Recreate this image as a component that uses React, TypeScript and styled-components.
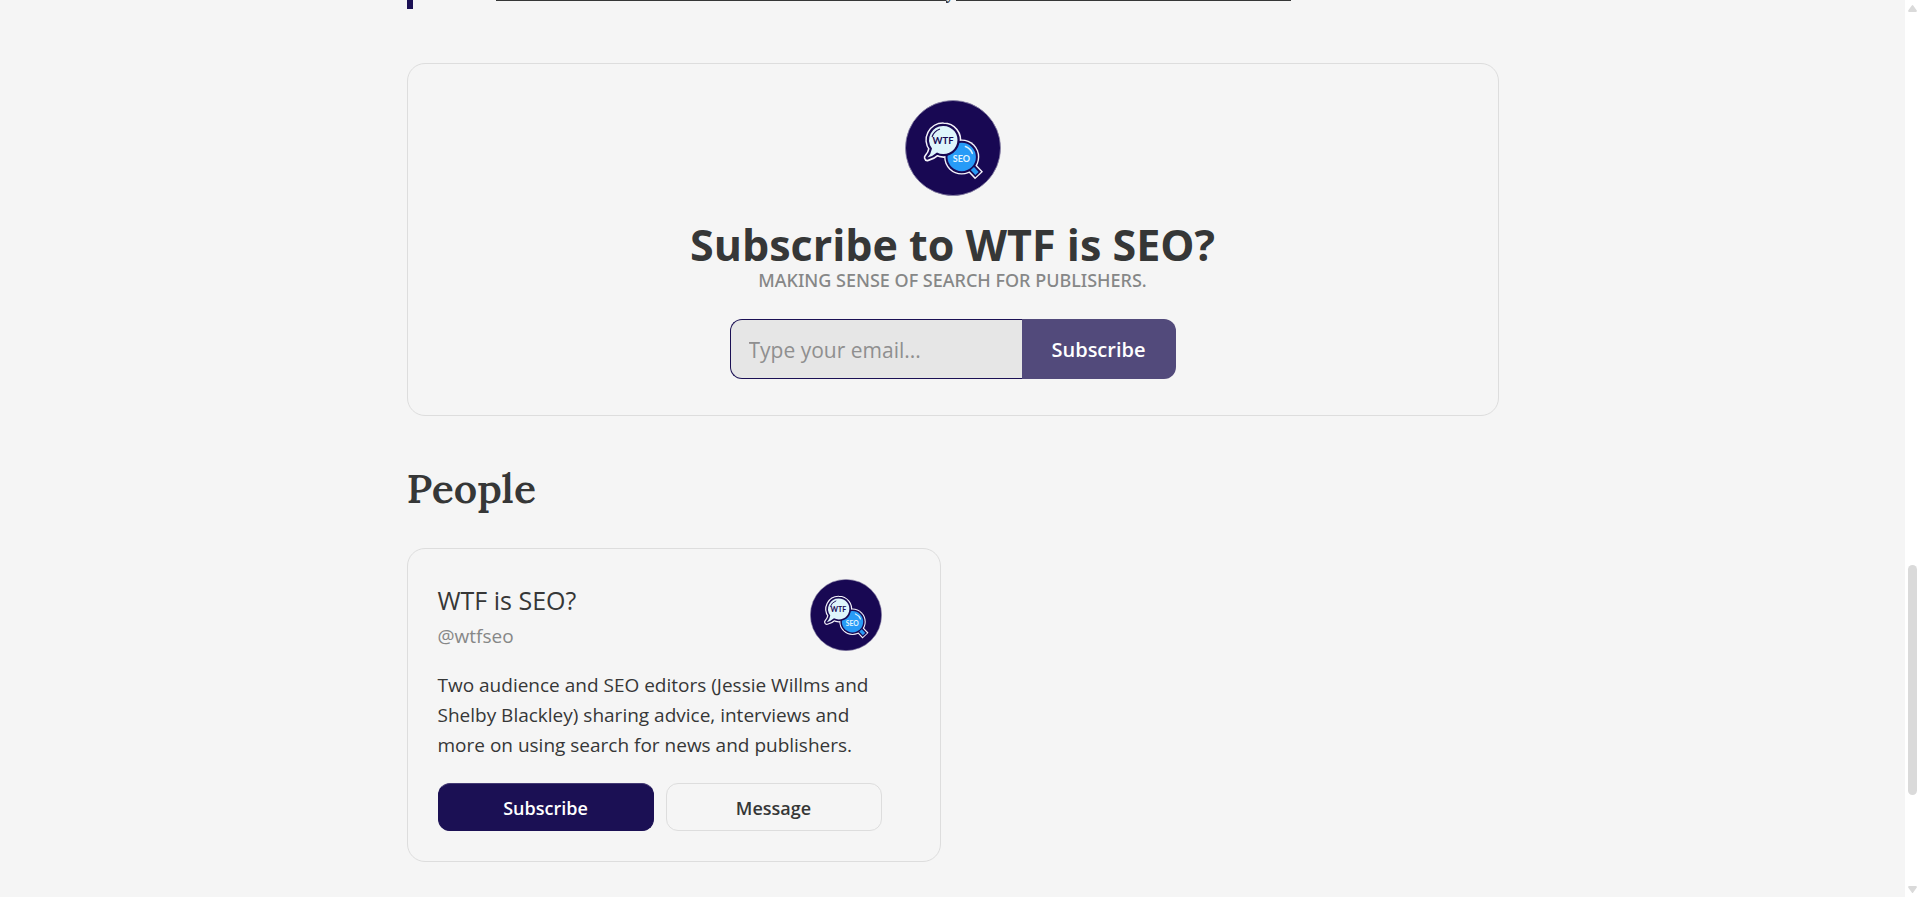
import React from "react";
import styled, { createGlobalStyle } from "styled-components";

const color = {
  page: "#f5f5f5",
  line: "#dddddd",
  ink: "#363737",
  muted: "#868787",
  brand: "#1b1054",
  brandSoft: "#524a7b",
  field: "#e6e6e6",
  thumb: "#dadada",
};

const GlobalStyle = createGlobalStyle`
  *, *::before, *::after { box-sizing: border-box; }
  body {
    margin: 0;
    background: ${color.page};
    color: ${color.ink};
    font-family: "Open Sans", "Noto Sans", sans-serif;
  }
  h1, h2, h3, p, blockquote { margin: 0; }
`;

const Page = styled.div`
  display: flex;
  height: 100vh;
  overflow: hidden;
`;

const Content = styled.main`
  flex: 1;
  padding: 0 24px;
`;

const Column = styled.div`
  max-width: 1092px;
  margin: 0 auto;
`;

const Quote = styled.blockquote`
  height: 9px;
  margin-bottom: 54px;
  padding-left: 83px;
  border-left: 6px solid ${color.brand};
`;

const QuoteLink = styled.a`
  display: flex;
  max-width: 795px;
  color: ${color.ink};
  text-decoration: none;
`;

const Underline = styled.span<{ $grow: number }>`
  flex: ${(p) => p.$grow} 1 0;
  height: 1px;
  background: ${color.ink};
`;

const Descender = styled.span`
  display: flex;
  align-items: flex-end;
  justify-content: center;
  width: 10px;
  height: 4px;
  overflow: hidden;
  font: 24px/30px Lora, "Liberation Serif", serif;
`;

const Card = styled.section`
  border: 1px solid ${color.line};
  border-radius: 18px;
`;

const SubscribeCard = styled(Card)`
  display: flex;
  flex-direction: column;
  align-items: center;
  padding: 36px 36px;
`;

const Avatar = styled.svg<{ $size: number }>`
  display: block;
  flex: none;
  width: ${(p) => p.$size}px;
  height: ${(p) => p.$size}px;
`;

const Title = styled.h1`
  margin-top: 24px;
  font-size: 43px;
  line-height: 50px;
  font-weight: 700;
  text-align: center;
`;

const Tagline = styled.p`
  color: ${color.muted};
  font: 500 18px/20px "Noto Sans", "Open Sans", sans-serif;
  text-transform: uppercase;
  text-align: center;
`;

const Form = styled.form`
  display: flex;
  width: 100%;
  max-width: 446px;
  height: 60px;
  margin-top: 29px;
`;

const EmailInput = styled.input`
  flex: 1;
  min-width: 0;
  padding: 2px 18px 0;
  border: 1px solid ${color.brand};
  border-right: 0;
  border-radius: 12px 0 0 12px;
  background: ${color.field};
  color: ${color.ink};
  font: 21px/30px "Open Sans", "Noto Sans", sans-serif;
  outline: 0;
  &::placeholder { color: #8f8f8f; opacity: 1; }
`;

const FormButton = styled.button`
  width: 154px;
  padding: 2px 0 0;
  border: 0;
  border-radius: 0 12px 12px 0;
  background: ${color.brandSoft};
  color: #fff;
  font: 600 20px/28px "Open Sans", "Noto Sans", sans-serif;
`;

const SectionTitle = styled.h2`
  margin: 48px 0 36px;
  font: 600 41px/48px Lora, "Liberation Serif", serif;
`;

const PersonCard = styled(Card)`
  max-width: 534px;
  padding: 30px 58px 30px 30px;
`;

const PersonHead = styled.header`
  display: flex;
  justify-content: space-between;
  gap: 24px;
`;

const PersonName = styled.h3`
  margin-top: 3px;
  font-size: 25px;
  line-height: 36px;
  font-weight: 400;
`;

const Handle = styled.p`
  color: ${color.muted};
  font-size: 19px;
  line-height: 36px;
`;

const Bio = styled.p`
  margin-top: 16px;
  font-size: 19px;
  line-height: 30px;
`;

const Actions = styled.div`
  display: flex;
  gap: 12px;
  margin-top: 23px;
`;

const ActionButton = styled.button<{ $primary?: boolean }>`
  flex: 1;
  height: 48px;
  padding: 2px 0 0;
  border: 1px solid ${(p) => (p.$primary ? color.brand : color.line)};
  border-top-color: ${(p) => (p.$primary ? "#453b75" : color.line)};
  border-radius: 12px;
  background: ${(p) => (p.$primary ? color.brand : "transparent")};
  color: ${(p) => (p.$primary ? "#fff" : color.ink)};
  font: 600 18px/24px "Open Sans", "Noto Sans", sans-serif;
`;

const ScrollTrack = styled.aside`
  display: flex;
  flex-direction: column;
  align-items: center;
  flex: none;
  width: 15px;
  height: 100vh;
  padding: 5px 0 4px;
  background: #fff;
`;

const ScrollArrow = styled.svg`
  display: block;
  flex: none;
  width: 9px;
  height: 7px;
  fill: ${color.thumb};
`;

const ScrollSpace = styled.div<{ $grow: number }>`
  flex: ${(p) => p.$grow} 1 0;
`;

const ScrollThumb = styled.div`
  flex: 230 1 0;
  width: 9px;
  border-radius: 5px;
  background: ${color.thumb};
`;

const bubble =
  "M38.5 26 A14 14 0 1 1 32 52.4 Q28 56 22.5 57.5 Q26 54 27 48.5 A14 14 0 0 1 38.5 26 Z";

function Logo({ size }: { size: number }) {
  return (
    <Avatar $size={size} viewBox="0 0 96 96" role="img" aria-label="WTF is SEO?">
      <circle cx="48" cy="48" r="47.5" fill="#180853" stroke="#8d87a8" strokeWidth="0.8" />
      <g strokeLinejoin="round">
        <path d="M67 68 L74 75.5" stroke="#f5f3fb" strokeWidth="11" />
        <circle cx="56.7" cy="57" r="17.6" fill="#f5f3fb" />
        <path d={bubble} fill="#f5f3fb" stroke="#f5f3fb" strokeWidth="7.6" />
        <path d="M66 67 L73.2 74.6" stroke="#180853" strokeWidth="8" />
        <circle cx="56.7" cy="57" r="16.2" fill="#180853" />
        <path d="M67.4 68.4 L72 73.4" stroke="#289af5" strokeWidth="4.4" />
        <circle cx="56.7" cy="57" r="14.2" fill="#279bf7" />
        <path d={bubble} fill="#def5fb" stroke="#180853" strokeWidth="4.4" />
        <path d={bubble} fill="#def5fb" />
      </g>
      <path d="M27.2 36.5 A12 12 0 0 1 34.5 29.2" fill="none" stroke="#180853" strokeWidth="1.2" strokeLinecap="round" />
      <path d="M60.5 46.6 A11.5 11.5 0 0 1 67.3 53.3" fill="none" stroke="#d8f2fd" strokeWidth="1.6" strokeLinecap="round" />
      <text x="38" y="44" textAnchor="middle" fill="#180853" fontFamily="Lato, sans-serif" fontWeight="700" fontSize="9.5">
        WTF
      </text>
      <text x="56.4" y="62.2" textAnchor="middle" fill="#e4f6ff" fontFamily="Lato, sans-serif" fontWeight="700" fontSize="9">
        SEO
      </text>
    </Avatar>
  );
}

export default function App() {
  return (
    <>
      <GlobalStyle />
      <Page>
        <Content>
          <Column>
            <Quote>
              <QuoteLink href="#">
                <Underline $grow={450} />
                <Descender>y</Descender>
                <Underline $grow={335} />
              </QuoteLink>
            </Quote>

            <SubscribeCard>
              <Logo size={96} />
              <Title>Subscribe to WTF is SEO?</Title>
              <Tagline>Making sense of search for publishers.</Tagline>
              <Form onSubmit={(e) => e.preventDefault()}>
                <EmailInput type="email" aria-label="Email" placeholder="Type your email..." />
                <FormButton type="submit">Subscribe</FormButton>
              </Form>
            </SubscribeCard>

            <SectionTitle>People</SectionTitle>

            <PersonCard>
              <PersonHead>
                <div>
                  <PersonName>WTF is SEO?</PersonName>
                  <Handle>@wtfseo</Handle>
                </div>
                <Logo size={72} />
              </PersonHead>
              <Bio>
                Two audience and SEO editors (Jessie Willms and Shelby Blackley) sharing advice,
                interviews and more on using search for news and publishers.
              </Bio>
              <Actions>
                <ActionButton type="button" $primary>
                  Subscribe
                </ActionButton>
                <ActionButton type="button">Message</ActionButton>
              </Actions>
            </PersonCard>
          </Column>
        </Content>

        <ScrollTrack aria-hidden="true">
          <ScrollArrow viewBox="0 0 9 7">
            <path d="M3.8 0.6 Q4.5 -0.4 5.2 0.6 L8.8 5.4 Q9 7 8 7 H1 Q0 7 0.2 5.4 Z" />
          </ScrollArrow>
          <ScrollSpace $grow={553} />
          <ScrollThumb />
          <ScrollSpace $grow={91} />
          <ScrollArrow viewBox="0 0 9 7">
            <path d="M3.8 6.4 Q4.5 7.4 5.2 6.4 L8.8 1.6 Q9 0 8 0 H1 Q0 0 0.2 1.6 Z" />
          </ScrollArrow>
        </ScrollTrack>
      </Page>
    </>
  );
}
